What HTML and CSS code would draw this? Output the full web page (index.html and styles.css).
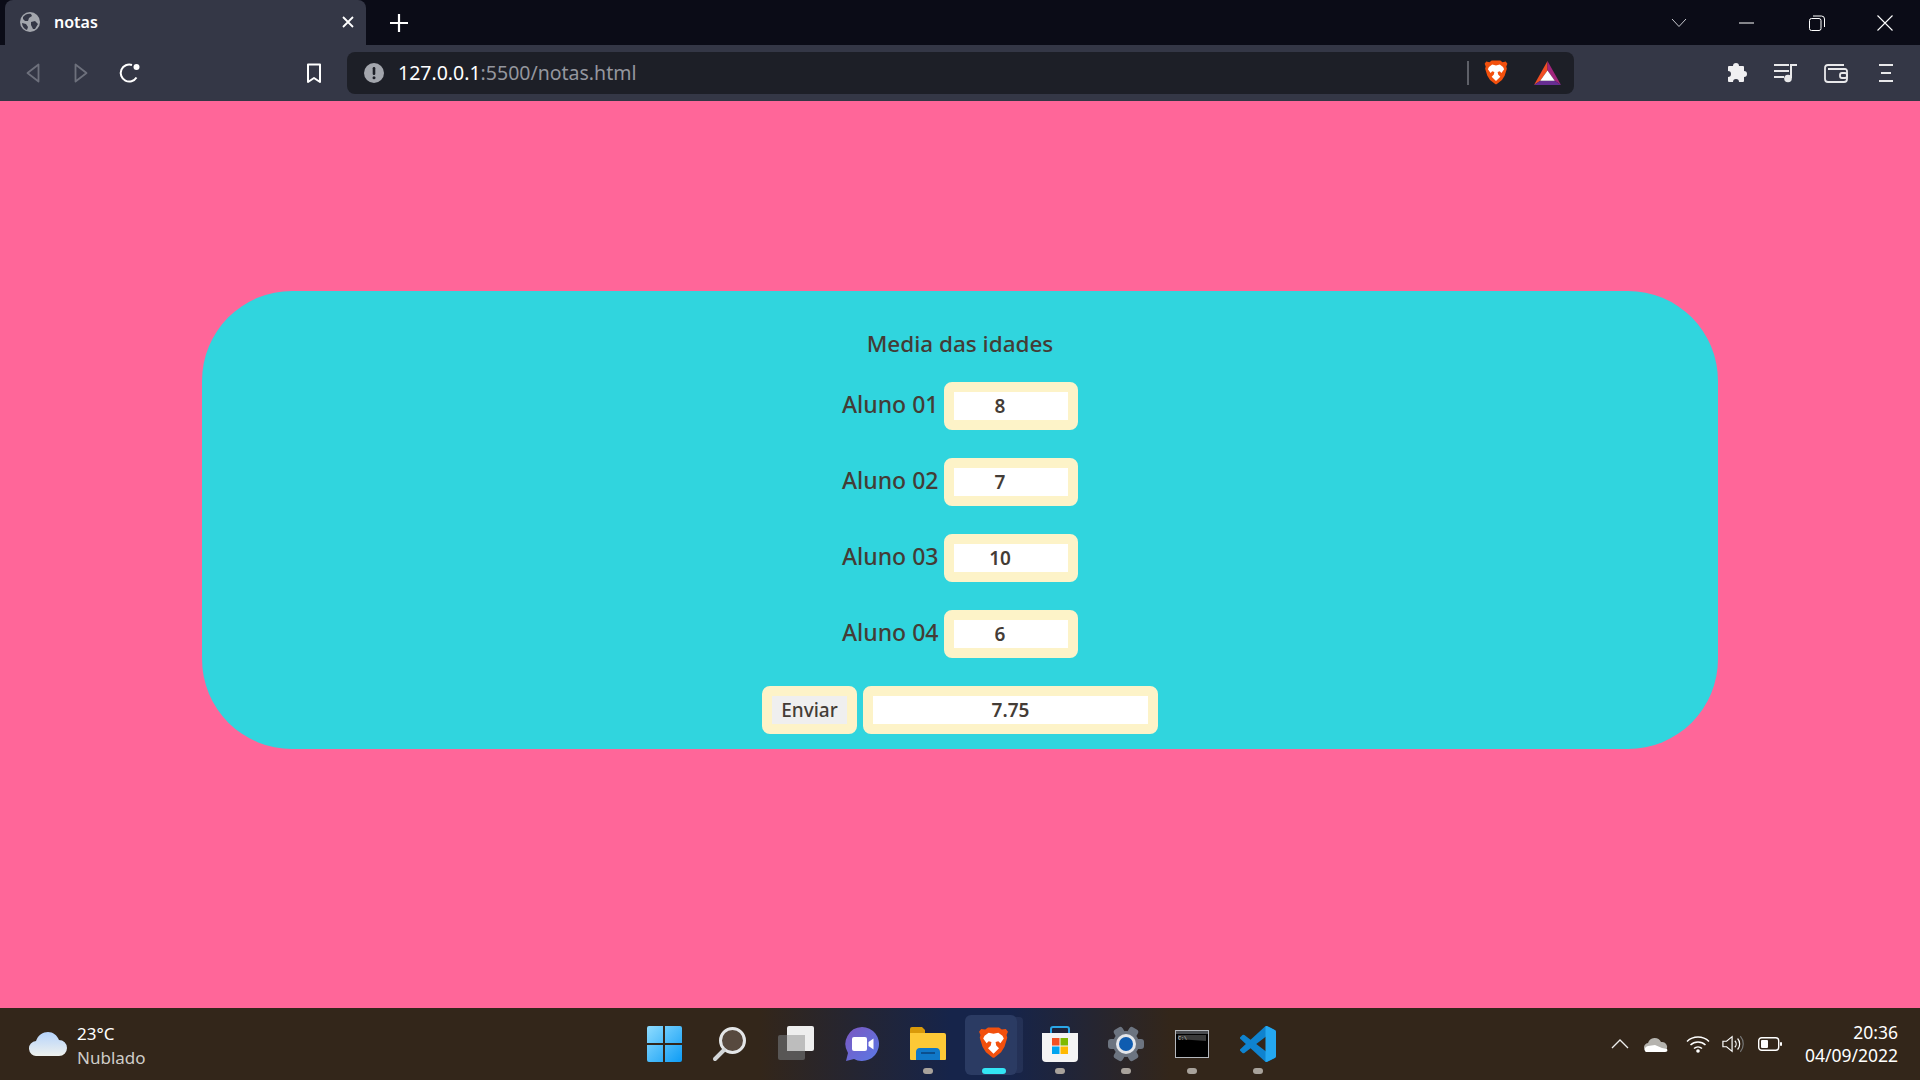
FILE: index.html
```html
<!DOCTYPE html>
<html lang="pt-BR">
<head>
  <meta charset="UTF-8" />
  <meta name="viewport" content="width=device-width, initial-scale=1.0"/>
  <title>notas</title>
  <link rel="stylesheet" href="styles.css">
</head>
<body>
  <div class="tabstrip">
    <div class="tab">
      <svg class="favicon" width="20" height="20" viewBox="0 0 20 20"><circle cx="10" cy="10" r="10" fill="#a3a6ad"/><path d="M3 5c2-3 6-4 8-3l1 2-3 2-1 3-3 0-2-2zM11 10l4-1 3 3-3 5-2 0-2-4zM2 11l4 1 2 3-1 3c-3-1-5-4-5-7z" fill="#343746"/></svg>
      <span class="tab-title">notas</span>
      <svg class="tab-close" width="12" height="12" viewBox="0 0 12 12"><path d="M1 1l10 10M11 1L1 11" stroke="#fff" stroke-width="1.8"/></svg>
    </div>
    <svg class="new-tab" width="18" height="18" viewBox="0 0 18 18"><path d="M9 0v18M0 9h18" stroke="#fff" stroke-width="2.2"/></svg>
    <div class="win-controls">
      <div class="win-btn win-chevron"><svg width="16" height="10" viewBox="0 0 16 10"><path d="M1 1l7 7.5L15 1" fill="none" stroke="#c9cad0" stroke-width="1"/></svg></div>
      <div class="win-btn win-min"><svg width="16" height="2" viewBox="0 0 16 2"><path d="M0 1h15" stroke="#fff" stroke-width="1"/></svg></div>
      <div class="win-btn win-restore"><svg width="16" height="16" viewBox="0 0 16 16"><rect x=".5" y="3.5" width="11.5" height="12" rx="2" fill="none" stroke="#fff"/><path d="M4 1h8.500a3 3 0 0 1 3 3v8" fill="none" stroke="#fff"/></svg></div>
      <div class="win-btn"><svg width="16" height="16" viewBox="0 0 16 16"><path d="M.5.500l15 15M15.500.500l-15 15" stroke="#fff" stroke-width="1.100"/></svg></div>
    </div>
  </div>

  <div class="toolbar">
    <div class="tool-btn"><svg width="14" height="20" viewBox="0 0 14 20"><path d="M12.500 1.500v17L1.500 10z" fill="none" stroke="#6d707c" stroke-width="1.800" stroke-linejoin="round"/></svg></div>
    <div class="tool-btn"><svg width="14" height="20" viewBox="0 0 14 20"><path d="M1.500 1.500v17l11-8.500z" fill="none" stroke="#6d707c" stroke-width="1.800" stroke-linejoin="round"/></svg></div>
    <div class="tool-btn tool-reload"><svg width="22" height="22" viewBox="0 0 22 22"><path d="M17.500 15.500A8.500 8.500 0 1 1 13 3" fill="none" stroke="#fff" stroke-width="2"/><circle cx="17.500" cy="5" r="3" fill="#fff"/></svg></div>
    <div class="tool-btn bookmark"><svg width="16" height="21" viewBox="0 0 16 21"><path d="M2 1.500h12v17.500l-6-4-6 4z" fill="none" stroke="#fff" stroke-width="2" stroke-linejoin="round"/></svg></div>
    <div class="address">
      <svg width="20" height="20" viewBox="0 0 20 20"><circle cx="10" cy="10" r="10" fill="#a3a6ad"/><rect x="8.700" y="4" width="2.600" height="8" rx="1.200" fill="#1d1f27"/><circle cx="10" cy="14.700" r="1.500" fill="#1d1f27"/></svg>
      <span class="url"><span class="url-host">127.0.0.1</span>:5500/notas.html</span>
      <span class="address-sep"></span>
      <svg class="shield" width="26" height="29" viewBox="0 0 24 26"><path d="M6 2.500L8 1h8l2 1.500 3-.5 1.500 2-1 2.500.5 2-2 6.500-2.500 4-5 4h-1l-5-4-2.500-4-2-6.500.5-2-1-2.500L3 2z" fill="#f2500d"/><path d="M5.500 7l3-2.200 3.500.8 3.500-.8 3 2.200 1 2-2.500 3.500-1.500-1.500-2 .5.500 2.500 2 2-4 4-4-4 2-2 .5-2.500-2-.5-1.500 1.500L4.500 9z" fill="#fff"/></svg>
      <svg class="bat" width="27" height="24" viewBox="0 0 26 23"><path d="M13 0v9L6 19l-6 4z" fill="#f04e23"/><path d="M13 0l13 23-6-4-7-10z" fill="#a1257d"/><path d="M0 23l6-4h14l6 4z" fill="#662d91"/><path d="M13 9l7 10H6z" fill="#fff"/></svg>
    </div>
    <div class="tool-group">
      <div class="tool-btn ext"><svg width="22" height="22" viewBox="0 0 22 22"><path d="M8 4a3 3 0 0 1 6 0h4a1 1 0 0 1 1 1v4a3 3 0 0 1 0 6v4a1 1 0 0 1-1 1h-4a3 3 0 0 0-6 0H4a1 1 0 0 1-1-1v-4a3 3 0 0 0 0-6V5a1 1 0 0 1 1-1z" fill="#f0f0f2"/></svg></div>
      <div class="tool-btn ext"><svg width="24" height="20" viewBox="0 0 24 20"><path d="M0 2h15M0 8h15M0 14h10" stroke="#e8e8ea" stroke-width="2"/><path d="M17 15V2h6" fill="none" stroke="#e8e8ea" stroke-width="2"/><circle cx="14" cy="15.500" r="3.800" fill="#e8e8ea"/></svg></div>
      <div class="tool-btn ext"><svg width="24" height="20" viewBox="0 0 24 20"><path d="M20 2H4a3 3 0 0 0-3 3v11a3 3 0 0 0 3 3h16a3 3 0 0 0 3-3V8a2 2 0 0 0-2-2H4" fill="none" stroke="#e8e8ea" stroke-width="1.800"/><rect x="16" y="10" width="7" height="5" rx="2" fill="none" stroke="#e8e8ea" stroke-width="1.800"/></svg></div>
      <div class="tool-btn ext"><svg width="14" height="20" viewBox="0 0 14 20"><path d="M0 2h14M2 10h10M0 18h14" stroke="#e8e8ea" stroke-width="2"/></svg></div>
    </div>
  </div>

  <main class="page">
    <form class="panel">
      <h1 class="panel-title">Media das idades</h1>
      <div class="row"><label class="row-label" for="a1">Aluno 01</label><input class="field" id="a1" type="number" value="8"></div>
      <div class="row"><label class="row-label" for="a2">Aluno 02</label><input class="field" id="a2" type="number" value="7"></div>
      <div class="row"><label class="row-label" for="a3">Aluno 03</label><input class="field" id="a3" type="number" value="10"></div>
      <div class="row"><label class="row-label" for="a4">Aluno 04</label><input class="field" id="a4" type="number" value="6"></div>
      <div class="row">
        <button class="send" type="button">Enviar</button>
        <input class="field result" type="text" value="7.75" readonly>
      </div>
    </form>
  </main>

  <footer class="taskbar">
    <div class="weather">
      <svg width="38" height="24" viewBox="0 0 38 24"><defs><linearGradient id="cloud" x1="0" y1="0" x2="0" y2="1"><stop offset="0" stop-color="#b5d3fb"/><stop offset="1" stop-color="#eef1ee"/></linearGradient></defs><path d="M8 24a7.500 7.500 0 0 1-1-15C9 3 14 0 19 0c5 0 9 3 11 8a8 8 0 0 1 0 16z" fill="url(#cloud)"/></svg>
      <div class="weather-text">
        <span class="temp">23°C</span>
        <span class="sky">Nublado</span>
      </div>
    </div>

    <div class="apps">
      <div class="app"><svg width="36" height="36" viewBox="0 0 36 36"><defs><linearGradient id="win" x1="0" y1="0" x2="1" y2="1"><stop offset="0" stop-color="#8fdcff"/><stop offset="1" stop-color="#0d9cf5"/></linearGradient></defs><path d="M1 2a2 2 0 0 1 2-2h14v17H1zM19 0h15a2 2 0 0 1 2 2v15H19zM1 19h16v17H3a2 2 0 0 1-2-2zM19 19h17v15a2 2 0 0 1-2 2H19z" fill="url(#win)"/></svg></div>
      <div class="app"><svg width="36" height="36" viewBox="0 0 36 36"><circle cx="20.500" cy="14.500" r="12" fill="#57493f" stroke="#e4e6e8" stroke-width="3"/><path d="M12 24L3 33" stroke="#d3d6d8" stroke-width="4" stroke-linecap="round"/></svg></div>
      <div class="app"><svg width="36" height="36" viewBox="0 0 36 36"><rect x="9" y="0" width="27" height="25" rx="2" fill="#eeeeee"/><rect x="0" y="9" width="27" height="25" rx="2" fill="#5f5f5f" fill-opacity=".85"/><rect x="9" y="9" width="18" height="16" fill="#bdbdbd"/></svg></div>
      <div class="app"><svg width="36" height="36" viewBox="0 0 36 36"><defs><linearGradient id="chat" x1="0" y1="0" x2="1" y2="1"><stop offset="0" stop-color="#7b57c0"/><stop offset="1" stop-color="#5a79e6"/></linearGradient></defs><path d="M18 1a17 17 0 1 1-8 32l-8 2 2-8A17 17 0 0 1 18 1z" fill="url(#chat)"/><rect x="8" y="11" width="15" height="14" rx="2" fill="#fff"/><path d="M24.500 16l5-3.500v11l-5-3.500z" fill="#fff"/></svg></div>
      <div class="app"><svg width="36" height="36" viewBox="0 0 36 36"><path d="M0 3a2 2 0 0 1 2-2h10l3 3v4H0z" fill="#d99a0a"/><path d="M0 7h34a2 2 0 0 1 2 2v24a1 1 0 0 1-1 1H1a1 1 0 0 1-1-1z" fill="#fdc936"/><path d="M6 34v-8c0-2 1-4 4-4h16c3 0 4 2 4 4v8z" fill="#1078c8"/><rect x="11" y="26" width="14" height="2" fill="#0b4f8e"/></svg><span class="dot"></span></div>
      <div class="app app-active"><svg width="33" height="36" viewBox="0 0 24 26"><path d="M6 2.500L8 1h8l2 1.500 3-.5 1.500 2-1 2.500.5 2-2 6.500-2.500 4-5 4h-1l-5-4-2.500-4-2-6.500.5-2-1-2.500L3 2z" fill="#f2500d"/><path d="M5.500 7l3-2.200 3.500.8 3.500-.8 3 2.200 1 2-2.500 3.500-1.500-1.500-2 .5.500 2.500 2 2-4 4-4-4 2-2 .5-2.500-2-.5-1.500 1.500L4.500 9z" fill="#fff"/></svg><span class="dot dot-active"></span></div>
      <div class="app"><svg width="36" height="36" viewBox="0 0 36 36"><path d="M9 8V3a2 2 0 0 1 2-2h14a2 2 0 0 1 2 2v5" fill="none" stroke="#2aa7e8" stroke-width="2"/><path d="M0 7h36v25a4 4 0 0 1-4 4H4a4 4 0 0 1-4-4z" fill="#f4f4f4"/><rect x="10" y="12" width="7.500" height="7.500" fill="#f25022"/><rect x="18.500" y="12" width="7.500" height="7.500" fill="#7fba00"/><rect x="10" y="20.500" width="7.500" height="7.500" fill="#00a4ef"/><rect x="18.500" y="20.500" width="7.500" height="7.500" fill="#ffb900"/></svg><span class="dot"></span></div>
      <div class="app"><svg width="36" height="36" viewBox="0 0 36 36"><g fill="#6c7480"><circle cx="18" cy="18" r="13"/><rect x="0" y="13" width="36" height="10" rx="3"/><rect x="0" y="13" width="36" height="10" rx="3" transform="rotate(60 18 18)"/><rect x="0" y="13" width="36" height="10" rx="3" transform="rotate(120 18 18)"/></g><circle cx="18" cy="18" r="10" fill="#e4e6ea"/><circle cx="18" cy="18" r="7" fill="#0f5cb0"/></svg><span class="dot"></span></div>
      <div class="app"><svg width="34" height="28" viewBox="0 0 34 28"><rect x=".500" y=".500" width="33" height="27" fill="#000" stroke="#b5b8bd"/><rect x="1" y="1" width="32" height="3" fill="#4a4c50"/><path d="M3 5h28v6L3 9z" fill="#3a3a3a"/><text class="term-text" x="3" y="10">C:\</text></svg><span class="dot"></span></div>
      <div class="app"><svg width="36" height="36" viewBox="0 0 24 24"><defs><clipPath id="vs-right"><rect x="17" y="0" width="7" height="24"/></clipPath></defs><path id="vs" d="M23.150 2.587L18.210.21a1.494 1.494 0 0 0-1.705.29l-9.460 8.630-4.120-3.128a.999.999 0 0 0-1.276.057L.327 7.261A1 1 0 0 0 .326 8.740L3.899 12 .326 15.260a1 1 0 0 0 .001 1.479L1.650 17.940a.999.999 0 0 0 1.276.057l4.120-3.128 9.460 8.630a1.492 1.492 0 0 0 1.704.29l4.942-2.377A1.500 1.500 0 0 0 24 20.060V3.939a1.500 1.500 0 0 0-.850-1.352zm-5.146 14.861L10.826 12l7.178-5.448v10.896z" fill="#0f83cf"/><path d="M23.150 2.587L18.210.21a1.494 1.494 0 0 0-1.705.29L16.500 24l1.500-.2 5.150-2.450A1.500 1.500 0 0 0 24 20.060V3.939a1.500 1.500 0 0 0-.850-1.352z" fill="#24a7f0" clip-path="url(#vs-right)"/></svg><span class="dot"></span></div>
    </div>

    <div class="tray">
      <div class="tray-item tray-chevron"><svg width="18" height="10" viewBox="0 0 18 10"><path d="M1 9l8-8 8 8" fill="none" stroke="#eee" stroke-width="1.300"/></svg></div>
      <div class="tray-item tray-cloud"><svg width="24" height="16" viewBox="0 0 24 16"><path d="M5 16a4.500 4.500 0 0 1-1-9 7 7 0 0 1 13-1 5 5 0 0 1 2 10z" fill="#b5b3ae"/><path d="M2 16c-2-1-2-5 2-6l7-1 7 3 5 1c1 2 0 3-2 3z" fill="#fff"/></svg></div>
      <div class="tray-item tray-wifi"><svg width="24" height="18" viewBox="0 0 24 18"><path d="M1 6.500a16 16 0 0 1 22 0M4.500 10a11 11 0 0 1 15 0M8 13.500a6 6 0 0 1 8 0" fill="none" stroke="#fff" stroke-width="1.500"/><circle cx="12" cy="16" r="1.800" fill="#fff"/></svg></div>
      <div class="tray-item tray-volume"><svg width="24" height="20" viewBox="0 0 24 20"><path d="M1 7h4l6-5v16l-6-5H1z" fill="none" stroke="#fff" stroke-width="1.300"/><path d="M14 6.500a5 5 0 0 1 0 7M17 4a9 9 0 0 1 0 12" fill="none" stroke="#fff" stroke-width="1.300"/><path d="M20 1.500a13 13 0 0 1 0 17" fill="none" stroke="#777" stroke-width="1.300"/></svg></div>
      <div class="tray-item tray-battery"><svg width="24" height="14" viewBox="0 0 24 14"><rect x=".700" y=".700" width="20" height="12.600" rx="3" fill="none" stroke="#fff" stroke-width="1.400"/><rect x="3" y="3" width="7" height="8" rx="1" fill="#fff"/><rect x="22" y="5" width="2" height="4" rx="1" fill="#fff"/></svg></div>
      <div class="clock">
        <span>20:36</span>
        <span>04/09/2022</span>
      </div>
    </div>
  </footer>
</body>
</html>
```

FILE: styles.css
```css
* {
  box-sizing: border-box;
}

html, body {
  height: 100%;
}

body {
  margin: 0;
  display: flex;
  flex-direction: column;
  height: 100vh;
  overflow: hidden;
  font-family: "Noto Sans", "Open Sans", sans-serif;
  background-color: #ff6699;
}

/* browser chrome */
.tabstrip {
  display: flex;
  align-items: flex-end;
  height: 45px;
  flex: none;
  background-color: #0b0c17;
}

.tab {
  display: flex;
  align-items: center;
  width: 361px;
  height: 45px;
  margin-left: 5px;
  padding: 0 9px 1px 15px;
  background-color: #343746;
  border-radius: 8px 8px 0 0;
}

.tab-title {
  margin-left: 14px;
  color: #fff;
  font-size: 16px;
  font-weight: 600;
}

.tab-close {
  margin-left: auto;
  margin-right: 3px;
}

.new-tab {
  align-self: center;
  margin-left: 24px;
}

.win-controls {
  display: flex;
  align-self: stretch;
  margin-left: auto;
}

.win-btn {
  display: flex;
  align-items: center;
  justify-content: center;
  width: 70px;
}

.win-chevron {
  width: 62px;
}

.win-min {
  width: 74px;
}

.win-restore {
  width: 66px;
}

.toolbar {
  display: flex;
  align-items: center;
  height: 56px;
  flex: none;
  padding-left: 9px;
  background-color: #343746;
}

.tool-btn {
  display: flex;
  align-items: center;
  justify-content: center;
  width: 48px;
  height: 42px;
}

.tool-reload {
  padding-left: 2px;
}

.bookmark {
  margin-left: 137px;
}

.address {
  display: flex;
  align-items: center;
  width: 1227px;
  height: 42px;
  margin-left: 9px;
  padding-left: 17px;
  background-color: #1d1f27;
  border-radius: 8px;
}

.url {
  margin-left: 14px;
  padding-bottom: 2px;
  color: #94969e;
  font-size: 19.5px;
}

.url-host {
  color: #fff;
}

.address-sep {
  width: 2px;
  height: 24px;
  margin-left: auto;
  background-color: #5e6068;
}

.shield {
  margin-left: 14px;
}

.bat {
  margin-left: 25px;
  margin-right: 13px;
}

.tool-group {
  display: flex;
  margin-left: auto;
  padding-right: 9px;
}

.ext {
  width: 50px;
}

/* page */
.page {
  flex: 1;
  padding-top: 190px;
}

.panel {
  display: flex;
  flex-direction: column;
  align-items: center;
  gap: 28px;
  width: 1516px;
  height: 458px;
  margin: 0 auto;
  padding-top: 41px;
  background-color: #30d5de;
  border-radius: 90px;
  color: #443c36;
}

.panel-title {
  height: 22px;
  margin: 0;
  font-size: 22.5px;
  font-weight: 500;
  line-height: 24px;
}

.row {
  display: flex;
  align-items: center;
  gap: 6px;
  height: 48px;
}

.row-label {
  width: 96px;
  padding-bottom: 4px;
  font-size: 23px;
  font-weight: 500;
  white-space: nowrap;
}

.field {
  width: 134px;
  height: 48px;
  padding: 0 7px 0 0;
  border: 10px solid #fdf3c8;
  border-radius: 8px;
  background-color: #fff;
  color: #443c36;
  font-family: inherit;
  font-size: 19px;
  font-weight: 600;
  text-align: center;
  outline: none;
}

.result {
  width: 295px;
  padding: 0;
}

.send {
  width: 95px;
  height: 48px;
  padding: 0 0 1px;
  border: 10px solid #fdf3c8;
  border-radius: 8px;
  background-color: #efefef;
  color: #443c36;
  font-family: inherit;
  font-size: 19px;
  font-weight: 500;
}

/* windows taskbar */
.taskbar {
  display: grid;
  grid-template-columns: 1fr auto 1fr;
  align-items: center;
  height: 72px;
  flex: none;
  background: linear-gradient(to right, #33261a 0, #33261a 760px, #16244a 950px, #16244a 1010px, #33261a 1170px);
  color: #fff;
}

.weather {
  display: flex;
  align-items: center;
  gap: 10px;
  padding-left: 29px;
}

.weather-text {
  display: flex;
  flex-direction: column;
  padding-top: 3px;
  font-size: 17px;
  line-height: 24px;
}

.sky {
  color: #cfcdc9;
}

.apps {
  display: flex;
  padding-left: 1px;
}

.app {
  position: relative;
  display: flex;
  align-items: center;
  justify-content: center;
  width: 66px;
  height: 72px;
}

.app-active::before {
  content: "";
  position: absolute;
  top: 7px;
  bottom: 5px;
  left: 4px;
  right: 10px;
  background-color: rgba(120, 140, 190, 0.22);
  border-radius: 6px;
  box-shadow: 8px 0 0 -2px rgba(120, 140, 190, 0.13);
}

.app svg {
  position: relative;
}

.dot {
  position: absolute;
  bottom: 6px;
  left: 28px;
  width: 10px;
  height: 6px;
  background-color: #a8a29b;
  border-radius: 3px;
}

.dot-active {
  left: 21px;
  width: 24px;
  background-color: #33e5f5;
}

.term-text {
  fill: #ddd;
  font-family: "Liberation Mono", monospace;
  font-size: 5px;
}

.tray {
  display: flex;
  align-items: center;
  justify-content: flex-end;
  padding-right: 22px;
}

.tray-item {
  display: flex;
  align-items: center;
  justify-content: center;
}

.tray-chevron,
.tray-cloud {
  width: 36px;
}

.tray-wifi {
  width: 48px;
}

.tray-volume {
  width: 22px;
}

.tray-battery {
  width: 52px;
}

.clock {
  display: flex;
  flex-direction: column;
  align-items: flex-end;
  margin-left: 9px;
  font-size: 17.5px;
  line-height: 23px;
}
```
